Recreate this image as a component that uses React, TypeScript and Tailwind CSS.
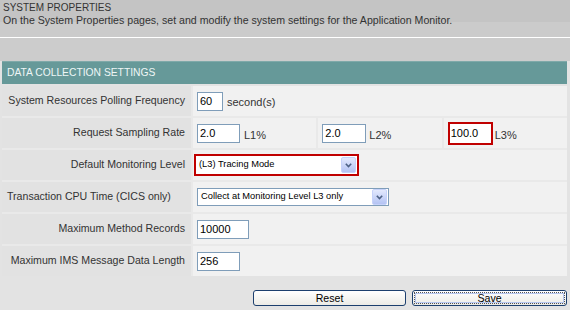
import React from 'react';

function Field({ value, className }: { value: string; className: string }) {
  return (
    <input
      readOnly
      value={value}
      className={`h-[19px] border border-[#7f9db9] bg-white px-[2px] text-[11px] text-black outline-none ${className}`}
    />
  );
}

function Arrow() {
  return (
    <span className="flex h-[16px] w-[15px] items-center justify-center rounded-[2px] border border-[#c6d2fa] bg-gradient-to-b from-[#e3e9fd] to-[#b4c3f3]">
      <svg width="7" height="5" viewBox="0 0 7 5">
        <path d="M0.8 0.8 L3.5 3.6 L6.2 0.8" fill="none" stroke="#4d6185" strokeWidth="1.6" />
      </svg>
    </span>
  );
}

function Select({ text, className }: { text: string; className: string }) {
  return (
    <div className={`flex h-[18px] items-center justify-between border border-[#7f9db9] bg-white pl-[3px] pr-px ${className}`}>
      <span className="text-[9.3px] text-black">{text}</span>
      <Arrow />
    </div>
  );
}

function Row({ label, left, children }: { label: string; left?: boolean; children: React.ReactNode }) {
  return (
    <div className="flex h-[30px] gap-[2px]">
      <div
        className={`flex w-[189px] items-center whitespace-nowrap bg-[#e2e2e2] text-[10.6px] ${left ? 'justify-start pl-[5px]' : 'justify-end pr-[6px]'}`}
      >
        {label}
      </div>
      {children}
    </div>
  );
}

export default function App() {
  return (
    <div className="flex h-[310px] w-[570px] flex-col overflow-hidden bg-[#cbcbcb] font-['Liberation_Sans',Arial,sans-serif] text-[#333]">
      {/* PAGE TITLE */}
      <div className="h-[37px] bg-gradient-to-b from-[#c4c4c4] from-60% to-[#cbcbcb] to-60% px-[3px] pt-[2px]">
        <div className="text-[10px] leading-[12px]">SYSTEM PROPERTIES</div>
        <div className="text-[10.6px] leading-[13px]">
          On the System Properties pages, set and modify the system settings for the Application Monitor.
        </div>
      </div>
      <div className="h-px bg-white" />
      <div className="h-[23px] bg-[#cccccc]" />

      {/* PANEL */}
      <div className="flex-1 bg-[#e3e3e3] pl-[2px] pr-[3px]">
        <div className="flex h-[23px] items-center border-t border-[#7fa9a9] bg-[#669999] pl-[5px] text-[10.3px] text-[#eef6f6]">
          DATA COLLECTION SETTINGS
        </div>

        <div className="mt-[2px] flex flex-col gap-[2px] bg-[#e9e9e9]">
          <Row label="System Resources Polling Frequency">
            <div className="flex flex-1 items-center bg-[#f1f1f1] pl-[4px] text-[11px]">
              <Field value="60" className="w-[26px]" />
              <span className="ml-[4px] mt-[3px]">second(s)</span>
            </div>
          </Row>

          <Row label="Request Sampling Rate">
            <div className="grid flex-1 grid-cols-3 gap-[2px]">
              <div className="flex items-center bg-[#f1f1f1] pl-[4px] text-[11px]">
                <Field value="2.0" className="w-[43px]" />
                <span className="ml-[4px] mt-[5px]">L1%</span>
              </div>
              <div className="flex items-center bg-[#f1f1f1] pl-[4px] text-[11px]">
                <Field value="2.0" className="w-[44px]" />
                <span className="ml-[3px] mt-[5px]">L2%</span>
              </div>
              <div className="flex items-center bg-[#f1f1f1] pl-[4px] text-[11px]">
                <div className="border-2 border-[#c00000]">
                  <input
                    readOnly
                    value="100.0"
                    className="h-[19px] w-[41px] bg-white px-px text-[11px] text-black outline-none"
                  />
                </div>
                <span className="ml-[2px] mt-[5px]">L3%</span>
              </div>
            </div>
          </Row>

          <Row label="Default Monitoring Level">
            <div className="flex flex-1 items-center bg-[#f1f1f1] pl-px">
              <div className="border-2 border-[#c00000]">
                <Select text="(L3) Tracing Mode" className="w-[161px] border-0" />
              </div>
            </div>
          </Row>

          <Row label="Transaction CPU Time (CICS only)" left>
            <div className="flex flex-1 items-center bg-[#f1f1f1] pl-[4px]">
              <Select text="Collect at Monitoring Level L3 only" className="w-[192px]" />
            </div>
          </Row>

          <Row label="Maximum Method Records">
            <div className="flex flex-1 items-center bg-[#f1f1f1] pl-[4px]">
              <Field value="10000" className="w-[52px]" />
            </div>
          </Row>

          <Row label="Maximum IMS Message Data Length">
            <div className="flex flex-1 items-center bg-[#f1f1f1] pl-[4px]">
              <Field value="256" className="w-[43px]" />
            </div>
          </Row>
        </div>

        {/* BUTTONS */}
        <div className="mt-[14px] flex justify-end gap-[6px]">
          <button className="h-[16px] w-[153px] rounded-[3px] border border-[#1c3f6e] bg-gradient-to-b from-white to-[#ecebe6] text-[10.6px] leading-[14px] text-black">
            Reset
          </button>
          <button className="h-[16px] w-[155px] rounded-[3px] border border-[#1c3f6e] bg-gradient-to-b from-white to-[#ecebe6] p-px">
            <span className="flex h-full w-full items-center justify-center border border-dotted border-[#555] text-[10.6px] leading-[12px] text-black shadow-[inset_0_0_0_1px_#b8c8f0]">
              Save
            </span>
          </button>
        </div>
      </div>
    </div>
  );
}
